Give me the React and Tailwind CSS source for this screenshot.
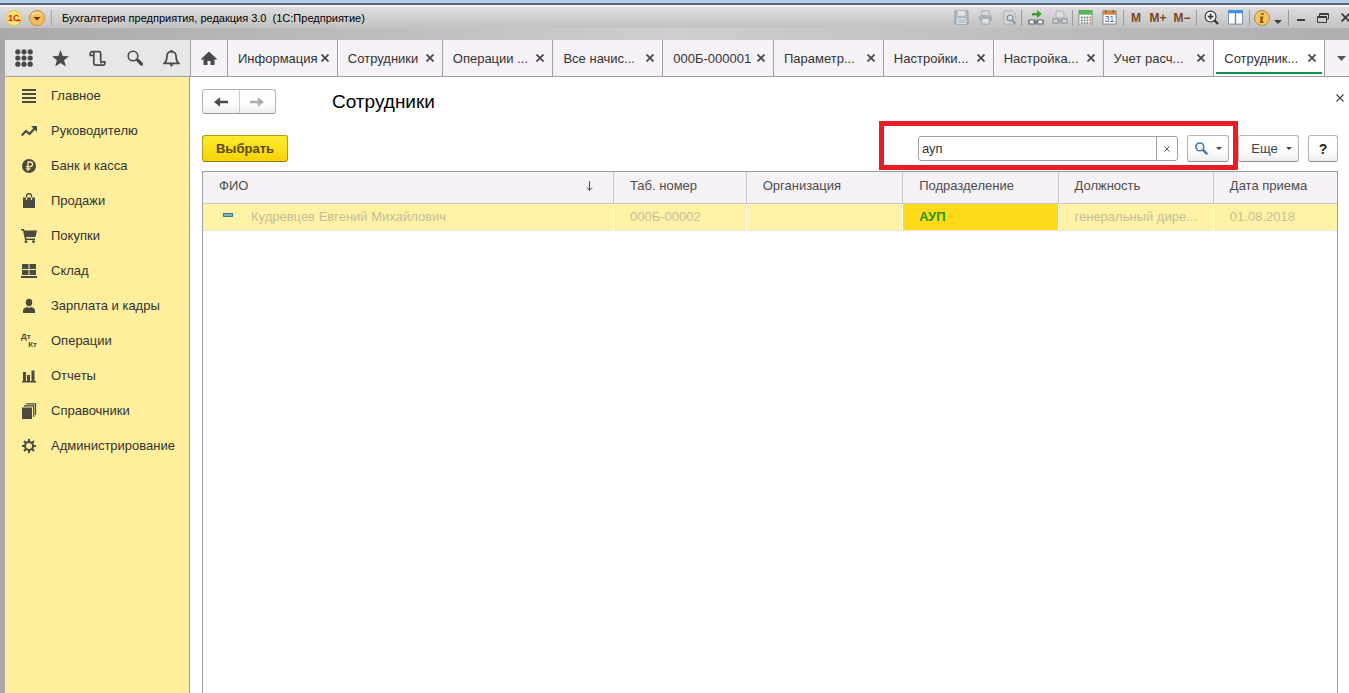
import clsx from 'clsx';

const tabs = [
  { label: 'Информация', grow: 'flex-[110]' },
  { label: 'Сотрудники', grow: 'flex-[104]' },
  { label: 'Операции ...', grow: 'flex-[111]' },
  { label: 'Все начис...', grow: 'flex-[110]' },
  { label: '000Б-000001', grow: 'flex-[111]' },
  { label: 'Параметр...', grow: 'flex-[110]' },
  { label: 'Настройки...', grow: 'flex-[110]' },
  { label: 'Настройка...', grow: 'flex-[110]' },
  { label: 'Учет расч...', grow: 'flex-[111]' },
  { label: 'Сотрудник...', grow: 'flex-[111]', active: true },
];

const columns = [
  { label: 'ФИО', width: 'w-[36.2%]', sorted: true },
  { label: 'Таб. номер', width: 'w-[11.7%]' },
  { label: 'Организация', width: 'w-[13.8%]' },
  { label: 'Подразделение', width: 'w-[13.7%]' },
  { label: 'Должность', width: 'w-[13.7%]' },
  { label: 'Дата приема', width: 'w-[10.9%]' },
];

function Svg({ size = 16, className, children }) {
  return (
    <svg
      width={size}
      height={size}
      viewBox="0 0 16 16"
      fill="currentColor"
      aria-hidden="true"
      className={clsx('shrink-0', className)}
    >
      {children}
    </svg>
  );
}

function Caret({ className }) {
  return (
    <svg width="6" height="3" viewBox="0 0 6 3" fill="currentColor" aria-hidden="true" className={className}>
      <path d="M0 0h6L3 3z" />
    </svg>
  );
}

function Cross({ size = 8, stroke = 1.2 }) {
  return (
    <svg width={size} height={size} viewBox="0 0 8 8" fill="none" stroke="currentColor" strokeWidth={stroke} aria-hidden="true">
      <path d="M.5.5l7 7M7.5.5l-7 7" />
    </svg>
  );
}

const menu = [
  {
    label: 'Главное',
    icon: <path d="M1 1h14v2H1zM1 5h14v2H1zM1 9h14v2H1zM1 13h14v2H1z" />,
  },
  {
    label: 'Руководителю',
    icon: (
      <>
        <path d="M.7 12.5L5 8l3.500 3 5-5.500" fill="none" stroke="currentColor" strokeWidth="2.2" />
        <path d="M10 3h6v6z" />
      </>
    ),
  },
  {
    label: 'Банк и касса',
    icon: (
      <>
        <circle cx="8" cy="8" r="7" />
        <path d="M7 13V4h2.2a2.2 2.2 0 0 1 0 4.6H5M5 10.8h4.5" fill="none" stroke="#ffee9c" strokeWidth="1.3" />
      </>
    ),
  },
  {
    label: 'Продажи',
    icon: (
      <>
        <path d="M2 4.5h12V15H2z" />
        <path d="M5.5 4.5V3a2.5 2.5 0 0 1 5 0v1.5" fill="none" stroke="currentColor" strokeWidth="1.3" />
        <path d="M5.5 4.5V7M10.5 4.5V7" stroke="#ffee9c" strokeWidth="1.2" />
      </>
    ),
  },
  {
    label: 'Покупки',
    icon: (
      <>
        <path d="M0 1h3l.5 1.5H16L14.5 9H5l.4 1.5H14V12H4L2 2.5H0z" />
        <circle cx="5" cy="13.7" r="1.4" />
        <circle cx="12.5" cy="13.7" r="1.4" />
      </>
    ),
  },
  {
    label: 'Склад',
    icon: <path d="M1 1h6.5v5H1zM8.5 1H15v5H8.5zM1 7h6.5v5H1zM8.5 7H15v5H8.5zM0 13h16v2H0z" />,
  },
  {
    label: 'Зарплата и кадры',
    icon: (
      <>
        <ellipse cx="8" cy="4.5" rx="3.2" ry="3.7" />
        <path d="M2 15v-2.5C2 10.5 4 9.5 6 9c1 1 3 1 4 0 2 .5 4 1.5 4 3.5V15z" />
      </>
    ),
  },
  { label: 'Операции', entry: true },
  {
    label: 'Отчеты',
    icon: <path d="M2 4h3v9H2zM6 7h3v6H6zM10.5 2.500h3V13h-3zM1 13h14v1.5H1z" />,
  },
  {
    label: 'Справочники',
    icon: (
      <>
        <path d="M1 4.500h10V16H1z" />
        <path d="M3 2.8h9.7V14M5 .8h9.5V12" fill="none" stroke="currentColor" strokeWidth="1.2" />
      </>
    ),
  },
  {
    label: 'Администрирование',
    icon: (
      <>
        <circle cx="8" cy="8" r="4" fill="none" stroke="currentColor" strokeWidth="2" />
        <path
          d="M8 1v3M8 12v3M1 8h3M12 8h3M3 3l2.2 2.2M10.8 10.8L13 13M13 3l-2.2 2.2M5.2 10.8L3 13"
          stroke="currentColor"
          strokeWidth="2"
        />
      </>
    ),
  },
];

const quickActions = [
  {
    label: 'Меню функций',
    icon: [2.5, 8, 13.5].map((y) => [2.5, 8, 13.5].map((x) => <circle key={`${x}-${y}`} cx={x} cy={y} r="2.3" />)),
    size: 18,
  },
  { label: 'Избранное', icon: <path d="M8 0l2.1 5.6 5.9.3-4.6 3.7L13 15.5 8 12.2 3 15.5l1.6-5.9L0 5.9l5.9-.3z" />, size: 17 },
  {
    label: 'История',
    icon: (
      <path
        d="M4.5 5H1.2V3.2A1.7 1.7 0 0 1 3 1.5h6.500A1.5 1.5 0 0 1 11 3v7.5M4.5 2v10.5A1.7 1.7 0 0 0 6.2 14.3h7a1.7 1.7 0 0 0 1.7-1.8v-1.3h-3.5v1.5"
        fill="none"
        stroke="currentColor"
        strokeWidth="1.6"
      />
    ),
    size: 17,
  },
  {
    label: 'Поиск',
    icon: (
      <>
        <circle cx="6" cy="6" r="4.8" fill="none" stroke="currentColor" strokeWidth="1.6" />
        <path d="M9.5 9.5L11 11" stroke="currentColor" strokeWidth="1.6" />
        <path d="M11 10.500l3.500 3.500" stroke="currentColor" strokeWidth="3.2" strokeLinecap="round" />
      </>
    ),
    size: 16,
  },
  {
    label: 'Уведомления',
    icon: (
      <>
        <path
          d="M8 1.5c-3 0-4.3 2-4.3 4.5 0 3.5-.7 5-2.5 6.5h13.6c-1.8-1.5-2.5-3-2.5-6.5 0-2.5-1.3-4.5-4.3-4.5z"
          fill="none"
          stroke="currentColor"
          strokeWidth="1.6"
        />
        <path d="M7 0h2v2H7zM6 13.5h4L8 16z" />
      </>
    ),
    size: 17,
  },
];

function BarButton({ label, children, className = 'w-6' }) {
  return (
    <button type="button" aria-label={label} className={clsx('flex h-5 items-center justify-center', className)}>
      {children}
    </button>
  );
}

function BarDivider({ className = 'mx-0.5' }) {
  return <span className={clsx('h-4 w-px bg-[#9d9d9d]', className)} />;
}

function TitleBar() {
  return (
    <header className="flex h-[23px] items-center border-t-2 border-[#f6f6f6] bg-linear-to-b from-[#dfdddf] to-[#c2c2c2] pl-1.5">
      <svg width="16" height="16" viewBox="0 0 16 16" className="shrink-0">
        <circle cx="8" cy="8" r="7.5" fill="#ffe568" stroke="#e3bc4c" strokeWidth=".8" />
        <text x="2" y="11" fontSize="9" fontWeight="bold" fontFamily="Liberation Sans" fill="#d61a1a">
          1С
        </text>
        <path d="M10 10.5h4.5" stroke="#d61a1a" strokeWidth="1.2" />
      </svg>
      <button type="button" aria-label="Главное меню" className="ml-[7px] shrink-0">
        <svg width="16" height="16" viewBox="0 0 16 16" className="block">
          <circle cx="8" cy="8" r="7.5" fill="#f9bd58" stroke="#c88b2a" />
          <path d="M3 5a6 5 0 0 1 10 0" fill="none" stroke="#ffe0a0" strokeWidth="2" />
          <path d="M4.5 7h7L8 10.5z" fill="#5b3a0d" />
        </svg>
      </button>
      <span className="mr-2 ml-1.5 h-4 w-px shrink-0 bg-[#a5a5a5]" />
      <h1 className="flex-1 pl-0.5 text-[11px] whitespace-pre text-black">
        Бухгалтерия предприятия, редакция 3.0  (1С:Предприятие)
      </h1>
      <div className="flex shrink-0 items-center">
        <BarButton label="Сохранить">
          <Svg size={15}>
            <path d="M1 1h14v14H1z" fill="#b2bac2" stroke="#939ca6" />
            <path d="M4 1h8v5H4zM3 9h10v6H3z" fill="#dfe3e7" />
            <path d="M4 11h8M4 13h8" stroke="#a3abb3" />
          </Svg>
        </BarButton>
        <BarButton label="Печать">
          <Svg size={15}>
            <path d="M4 1h8v5H4z" fill="#d8dade" stroke="#a2a8ae" />
            <path d="M1 6h14v6H1z" fill="#a9b0b7" />
            <path d="M4 9h8v6H4z" fill="#dde0e4" stroke="#9da5ac" />
          </Svg>
        </BarButton>
        <BarButton label="Просмотр">
          <Svg size={15}>
            <path d="M2 1h9l3 3v11H2z" fill="#d5d9dd" stroke="#a8afb6" />
            <circle cx="8.5" cy="8.5" r="3" fill="#dce4ea" stroke="#87929c" strokeWidth="1.5" />
            <path d="M11 11l3 3.500" stroke="#87929c" strokeWidth="2" />
          </Svg>
        </BarButton>
        <BarDivider className="mr-0.5" />
        <BarButton label="Получить ссылку">
          <Svg size={16}>
            <path d="M4 3h5V0l5 4-5 4V5.5H4z" fill="#39a32f" />
            <path d="M1 10h6v4H1zM9 10h6v4H9zM5 12h6" fill="#f3f3f3" stroke="#59636c" strokeWidth="1.2" />
          </Svg>
        </BarButton>
        <BarButton label="Перейти по ссылке">
          <Svg size={16}>
            <path d="M4 1h6l2 2v5H4z" fill="#dcdee0" stroke="#a9aeb2" />
            <path d="M1 9h6v4H1zM9 9h6v4H9zM5 11h6" fill="#d8dade" stroke="#9ca2a8" strokeWidth="1.3" />
          </Svg>
        </BarButton>
        <BarDivider className="mx-0" />
        <BarButton label="Калькулятор">
          <Svg size={15}>
            <path d="M1 0h14v16H1z" fill="#fff" stroke="#74917a" />
            <path d="M1 0h14v5H1z" fill="#58b558" />
            <path d="M4 7v8M7 7v8M10 7v8" stroke="#7d8b82" strokeDasharray="2 1" strokeWidth="2" />
            <path d="M13 7v8" stroke="#d87c64" strokeDasharray="2 1" strokeWidth="2" />
          </Svg>
        </BarButton>
        <BarButton label="Календарь">
          <Svg size={15}>
            <path d="M1 1h14v14H1z" fill="#fff" stroke="#7b7b7b" />
            <path d="M1 1h14v4H1z" fill="#d48142" />
            <path d="M4 0v3M12 0v3" stroke="#733f1c" />
            <text x="3" y="13" fontSize="9" fontFamily="Liberation Sans" fill="#34568a">
              31
            </text>
          </Svg>
        </BarButton>
        <BarDivider />
        <div className="flex text-xs font-bold text-[#7c4720]">
          <button type="button" className="w-5">M</button>
          <button type="button" className="w-6">M+</button>
          <button type="button" className="w-6">M−</button>
        </div>
        <BarDivider />
        <BarButton label="Увеличить">
          <Svg size={15}>
            <circle cx="7" cy="7" r="5.8" fill="#f8f8f8" stroke="#353535" strokeWidth="1.2" />
            <path d="M4 7h6M7 4v6" stroke="#353535" strokeWidth="1.8" />
            <path d="M11 11l4 4" stroke="#353535" strokeWidth="2.4" />
          </Svg>
        </BarButton>
        <BarButton label="Панели">
          <Svg size={15}>
            <path d="M.5 1h15v14H.5z" fill="#fff" stroke="#6e87a8" />
            <path d="M0 0h16v3.5H0z" fill="#4292df" />
            <path d="M8 3v12" stroke="#6e87a8" strokeWidth="1.5" />
          </Svg>
        </BarButton>
        <BarDivider />
        <BarButton label="О программе" className="w-5">
          <Svg size={16}>
            <circle cx="8" cy="8" r="7.5" fill="#f9c65c" stroke="#a98a50" />
            <path d="M6 6.5h3.4L8.500 11.5h1V13H5.8l.9-5H6z" fill="#8a5a14" />
            <path d="M7.5 3h2.3l-.4 2H7.2z" fill="#8a5a14" />
          </Svg>
        </BarButton>
        <button type="button" aria-label="Еще команды" className="flex h-5 w-3 items-end justify-center pb-1 text-[#404040]">
          <svg width="8" height="4" viewBox="0 0 8 4" fill="currentColor">
            <path d="M0 0h8L4 4z" />
          </svg>
        </button>
        <BarDivider className="mr-0.5 ml-1" />
        <BarButton label="Свернуть" className="w-5 text-[#3a3a3a]">
          <svg width="8" height="8" viewBox="0 0 8 8">
            <path d="M0 5h8v2H0z" fill="currentColor" />
          </svg>
        </BarButton>
        <BarButton label="Восстановить" className="w-6 text-[#3a3a3a]">
          <svg width="12" height="10" viewBox="0 0 12 10" fill="none" stroke="currentColor">
            <path d="M2.5 3V.5h9V6H9.5M2 1.5h9M.5 3.5h9v6h-9zM.5 4.5h9" />
          </svg>
        </BarButton>
        <button type="button" aria-label="Закрыть" className="ml-1.5 w-2 overflow-hidden text-[#3a3a3a]">
          <Cross size={9} stroke={1.6} />
        </button>
      </div>
    </header>
  );
}

function TabBar() {
  return (
    <div className="flex h-[37px] border-b border-[#9f9f9f] bg-[#f6f1f6]">
      <div className="flex w-[185px] shrink-0 items-center bg-[#e7e7e7] text-[#4a4a4a]">
        {quickActions.map(({ label, icon, size }) => (
          <button key={label} type="button" aria-label={label} className="flex h-full flex-1 items-center justify-center">
            <Svg size={size}>{icon}</Svg>
          </button>
        ))}
      </div>
      <button
        type="button"
        aria-label="Начальная страница"
        className="flex w-[38px] shrink-0 items-center justify-center border-x border-[#9f9f9f] text-[#4a4a4a]"
      >
        <Svg>
          <path d="M8 1.5L16 9l-1 1-1.5-1v6h-4v-4h-3v4h-4V9L1 10 0 9z" />
        </Svg>
      </button>
      <nav className="flex min-w-0 flex-1">
        {tabs.map(({ label, grow, active }) => (
          <div
            key={label}
            className={clsx(
              'relative flex min-w-0 items-center justify-between border-r border-[#9f9f9f] pr-2 pl-2.5',
              grow,
              active && 'bg-white',
            )}
          >
            <a href="#" className="pt-0.5 whitespace-nowrap text-[#333333]">{label}</a>
            <button type="button" aria-label={`Закрыть ${label}`} className="shrink-0 text-[#444444]">
              <Cross stroke={1.7} />
            </button>
            {active && <span className="absolute inset-x-0.5 bottom-0.5 h-0.5 bg-[#12924f]" />}
          </div>
        ))}
      </nav>
      <button type="button" aria-label="Все вкладки" className="flex w-6 shrink-0 items-center justify-center pl-2 text-[#555555]">
        <svg width="9" height="5" viewBox="0 0 9 5" fill="currentColor">
          <path d="M0 0h9L4.5 5z" />
        </svg>
      </button>
    </div>
  );
}

function Sidebar() {
  return (
    <nav className="w-[185px] shrink-0 border-r border-[#b0a53f] bg-[#ffee9c] pt-px">
      {menu.map(({ label, icon, entry }) => (
        <a key={label} href="#" className="flex h-[35px] items-center gap-3.5 pl-4 text-[#333333]">
          {entry ? (
            <span aria-hidden="true" className="flex w-4 flex-col text-[8px] leading-[8px] font-bold text-[#4a4a42]">
              <span>Дт</span>
              <span className="text-right">Кт</span>
            </span>
          ) : (
            <Svg className="text-[#4a4a42]">{icon}</Svg>
          )}
          <span className="whitespace-nowrap">{label}</span>
        </a>
      ))}
    </nav>
  );
}

const plainButton =
  'flex h-[27px] items-center justify-center rounded-[3px] border border-[#b5b5b5] border-b-[#8f8f8f] bg-linear-to-b from-white from-50% to-[#eeeeee]';

function Toolbar() {
  return (
    <div className="flex items-center justify-between">
      <button
        type="button"
        className="h-[27px] w-[86px] rounded-[3px] border border-[#b09a1c] border-b-[#8c7a10] bg-linear-to-b from-[#ffea2e] to-[#f6d300] font-bold text-[#5a4a10]"
      >
        Выбрать
      </button>
      <div className="flex items-center gap-[9px]">
        <div className="relative flex items-center gap-[9px]">
          <div className="flex h-[25px] w-[260px] rounded-[3px] border border-[#a0a0a0] bg-white">
            <input
              type="text"
              aria-label="Поиск"
              defaultValue="ауп"
              className="min-w-0 flex-1 px-[3px] text-[#333333] outline-none"
            />
            <button
              type="button"
              aria-label="Очистить"
              className="flex w-[21px] items-center justify-center border-l border-[#a0a0a0] text-[#555555]"
            >
              <Cross size={6} />
            </button>
          </div>
          <button type="button" aria-label="Найти" className={clsx(plainButton, 'w-[42px] gap-2 text-[#444444]')}>
            <Svg size={13} className="text-[#3a78b0]">
              <circle cx="6" cy="6" r="4.8" fill="none" stroke="currentColor" strokeWidth="2" />
              <path d="M9.5 9.5L15 15" stroke="currentColor" strokeWidth="3" />
            </Svg>
            <Caret />
          </button>
          <span className="pointer-events-none absolute -top-3.5 -right-[9px] -bottom-2 -left-[39px] z-10 border-[5px] border-[#ec1c24]" />
        </div>
        <button type="button" className={clsx(plainButton, 'w-[61px] gap-2 pl-1.5 text-[#444444]')}>
          Еще
          <Caret />
        </button>
        <button type="button" className={clsx(plainButton, 'w-[30px] text-sm font-bold text-[#222222]')}>
          ?
        </button>
      </div>
    </div>
  );
}

function EmployeesTable() {
  return (
    <div className="mt-[9px] flex-1 border border-b-0 border-[#a0a0a0]">
      <table className="w-full table-fixed border-collapse text-left">
        <thead>
          <tr className="border-b border-[#c8c8c8] bg-[#f6f1f6]">
            {columns.map(({ label, width, sorted }) => (
              <th
                key={label}
                className={clsx(
                  'h-[31px] border-r border-[#c8c8c8] p-0 pb-0.5 pl-4 font-normal whitespace-nowrap text-[#4d4d4d] last:border-r-0',
                  width,
                )}
              >
                {sorted ? (
                  <span className="flex items-center justify-between pr-5">
                    {label}
                    <svg width="7" height="10" viewBox="0 0 7 10" fill="none" stroke="currentColor" aria-hidden="true">
                      <path d="M3.5 0v9M1 6.5l2.5 3 2.5-3" />
                    </svg>
                  </span>
                ) : (
                  label
                )}
              </th>
            ))}
          </tr>
        </thead>
        <tbody>
          <tr className="h-[27px] border-b border-[#e4e4e4] bg-[#fff2a4] text-[#c3bda0] [&>td]:border-r [&>td]:border-white [&>td]:pl-4 [&>td]:whitespace-nowrap [&>td:last-child]:border-r-0">
            <td>
              <span className="flex items-center gap-4 pl-1">
                <span className="-mt-1 h-1 w-2.5 border border-[#3d7787] bg-[#79b3bd]" />
                <span className="pl-0.5">Кудревцев Евгений Михайлович</span>
              </span>
            </td>
            <td>000Б-00002</td>
            <td />
            <td className="bg-[#ffda18] font-bold text-[#1f960c]">АУП</td>
            <td>генеральный дире...</td>
            <td>01.08.2018</td>
          </tr>
        </tbody>
      </table>
    </div>
  );
}

export default function App() {
  return (
    <div className="flex min-h-screen flex-col bg-white font-['Liberation_Sans',Arial,sans-serif] text-[13px] leading-4">
      <div className="h-[5px] border-b-2 border-[#5c6470] bg-[#b3d0ea]" />
      <div className="flex flex-1 flex-col bg-[#b5b3b3]">
        <TitleBar />
        <div className="h-3 bg-linear-to-r from-[#aaa8a8] via-[#cfcdcf] to-[#aeaeb0]" />
        <div className="flex flex-1 flex-col border-l-[5px] border-[#aaa7a8]">
          <TabBar />
          <div className="flex flex-1">
            <Sidebar />
            <main className="flex min-w-0 flex-1 flex-col bg-white pr-[11px] pl-3">
              <div className="flex items-center pt-3">
                <div className="flex h-[25px] w-[74px] rounded-[3px] border border-[#b5b5b5] border-b-[#969696] bg-linear-to-b from-white from-50% to-[#eeeeee]">
                  <button type="button" aria-label="Назад" className="flex flex-1 items-center justify-center text-[#4a4a4a]">
                    <Svg size={14}>
                      <path d="M0 8l7-5.5v4h9v3H7v4z" />
                    </Svg>
                  </button>
                  <button
                    type="button"
                    aria-label="Вперед"
                    className="flex flex-1 items-center justify-center border-l border-[#cccccc] text-[#acacac]"
                  >
                    <Svg size={14}>
                      <path d="M16 8L9 2.5v4H0v3h9v4z" />
                    </Svg>
                  </button>
                </div>
                <h2 className="ml-14 flex-1 text-[19px] leading-6 text-black">Сотрудники</h2>
                <button type="button" aria-label="Закрыть форму" className="-mt-2 -mr-1.5 text-[#444444]">
                  <Cross />
                </button>
              </div>
              <div className="pt-[21px]">
                <Toolbar />
              </div>
              <EmployeesTable />
            </main>
          </div>
        </div>
      </div>
    </div>
  );
}
